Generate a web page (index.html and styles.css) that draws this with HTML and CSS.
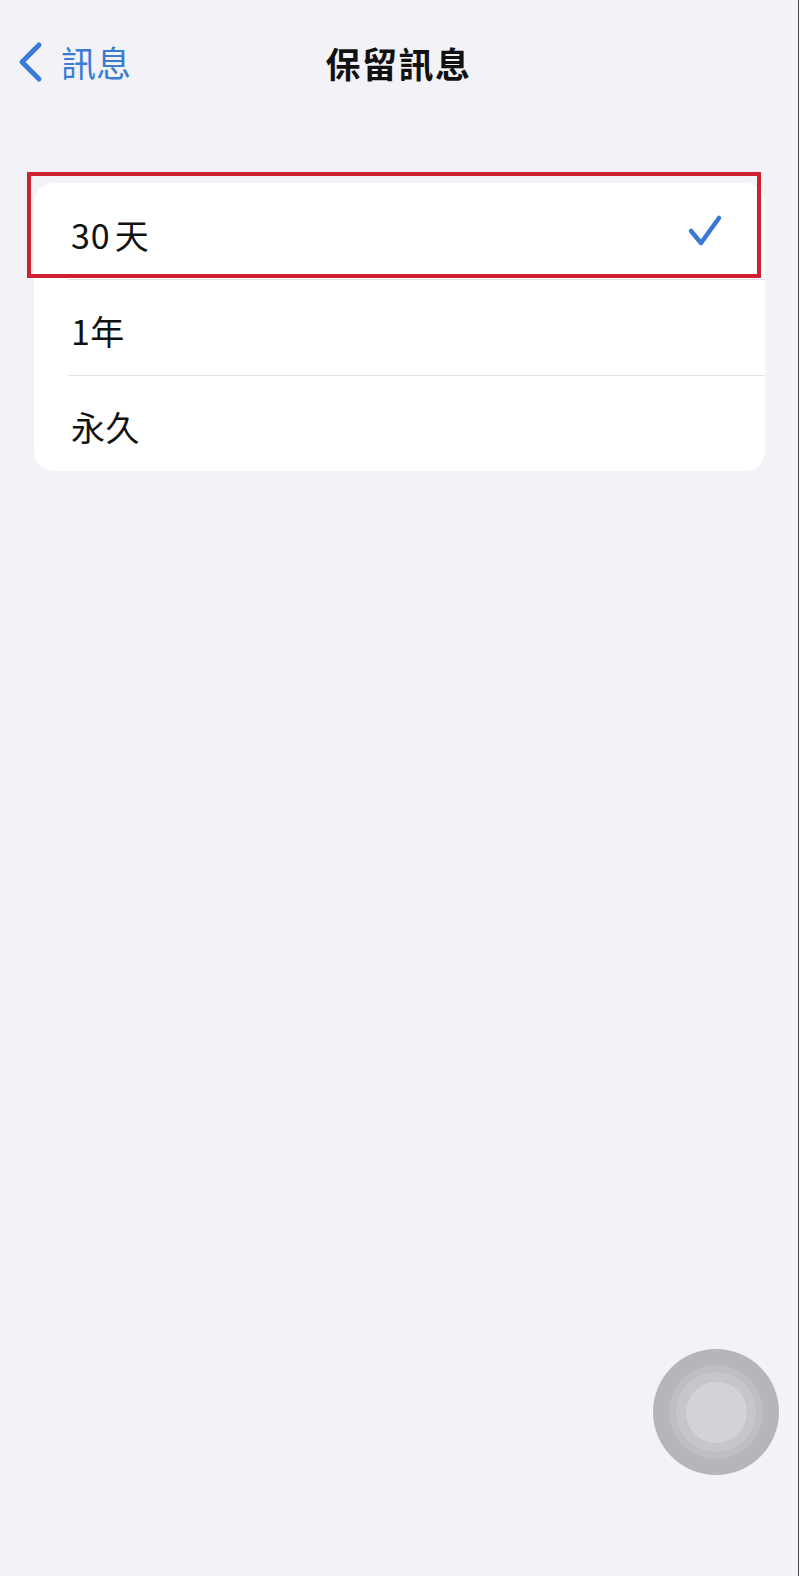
FILE: index.html
```html
<!DOCTYPE html>
<html>
<head>
  <meta charset="utf-8">
  <title>保留訊息</title>
  <link rel="stylesheet" href="styles.css">
</head>
<body>
  <div class="screen">
    <div class="navbar">
      <a class="back" href="#">
        <svg class="chevron" width="28" height="42" viewBox="0 0 28 42">
          <path d="M23 4 L6 21 L23 38" fill="none" stroke="#3a7bd8" stroke-width="5" stroke-linecap="round" stroke-linejoin="round"/>
        </svg>
        <span>訊息</span>
      </a>
      <h1 class="title">保留訊息</h1>
      <div></div>
    </div>

    <div class="list">
      <div class="row selected">
        <span class="label"><span class="num">30</span>天</span>
        <svg class="check" width="36" height="34" viewBox="0 0 36 34">
          <path d="M4 17 L14 29 L32 4" fill="none" stroke="#3a78d8" stroke-width="4.5" stroke-linecap="round" stroke-linejoin="round"/>
        </svg>
        <div class="highlight"></div>
      </div>
      <div class="row">
        <span class="label">1年</span>
      </div>
      <div class="row">
        <span class="label">永久</span>
      </div>
    </div>

    <div class="assistive">
      <div class="ring">
        <div class="ring-inner">
          <div class="knob"></div>
        </div>
      </div>
    </div>
  </div>
</body>
</html>
```

FILE: styles.css
```css
* {box-sizing: border-box}
html, body {
  margin: 0;
  padding: 0;
}
body {
  background: #f2f2f7;
  font-family: "Noto Sans CJK TC", "Noto Sans", sans-serif;
  color: #111;
}
.screen {
  position: relative;
  width: 800px;
  min-height: 1576px;
  background: #f2f2f7;
  border-right: 1px solid #fafafa;
  box-shadow: inset -1px 0 0 #4a4a4a;
}

/* nav bar */
.navbar {
  display: grid;
  grid-template-columns: 1fr auto 1fr;
  align-items: center;
  height: 126px;
  padding: 0 18px 0 16px;
}
.back {
  display: flex;
  align-items: center;
  gap: 17px;
  color: #3a7bd8;
  text-decoration: none;
  font-size: 35px;
  line-height: 1;
  margin-top: -2px;
}
.back span {
  position: relative;
  top: -1px;
}
.title {
  margin: 0;
  font-size: 35px;
  font-weight: 700;
  line-height: 1;
  letter-spacing: 1.5px;
  color: #111;
  position: relative;
  top: -1px;
}

/* option list */
.list {
  margin: 57px 34px 0 34px;
  background: #fff;
  border-radius: 20px;
}
.row {
  position: relative;
  display: flex;
  align-items: center;
  justify-content: space-between;
  height: 96px;
  padding: 8px 42px 0 37px;
}
.row + .row::before {
  content: "";
  position: absolute;
  top: 0;
  left: 34px;
  right: 0;
  height: 1px;
  background: #e1e1e5;
}
.label {
  font-size: 34px;
  line-height: 1;
  letter-spacing: 0.5px;
}
.num {
  margin-right: 4px;
  letter-spacing: 1px;
}
.check {
  margin-top: -8px;
}
.highlight {
  position: absolute;
  top: -11px;
  left: -7px;
  right: 4px;
  height: 106px;
  border: 4px solid #cf2230;
}

/* assistive touch button */
.assistive {
  position: absolute;
  left: 653px;
  top: 1349px;
  width: 126px;
  height: 126px;
  border-radius: 50%;
  background: #b6b6ba;
  display: flex;
  align-items: center;
  justify-content: center;
}
.ring {
  width: 94px;
  height: 94px;
  border-radius: 50%;
  background: #bfbfc3;
  display: flex;
  align-items: center;
  justify-content: center;
}
.ring-inner {
  width: 80px;
  height: 80px;
  border-radius: 50%;
  background: #c7c7cb;
  display: flex;
  align-items: center;
  justify-content: center;
}
.knob {
  width: 61px;
  height: 61px;
  border-radius: 50%;
  background: #d3d2d7;
}
```
